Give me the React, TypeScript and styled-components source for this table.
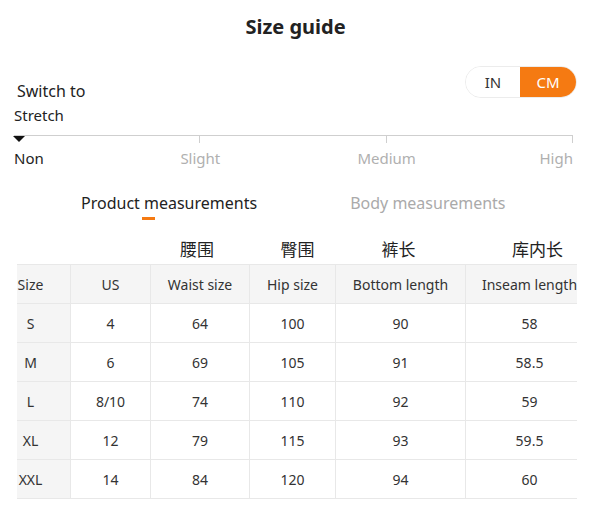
import React from "react";
import styled, { createGlobalStyle } from "styled-components";

const Global = createGlobalStyle`
  html, body { margin: 0; padding: 0; background: #fff; }
  body { font-family: "Noto Sans", "Noto Sans CJK SC", sans-serif; color: #333; }
`;

const Page = styled.div`
  width: 593px;
  height: 527px;
  box-sizing: border-box;
  padding: 0 16px 0 14px;
  overflow: hidden;
`;

const Title = styled.h1`
  margin: 0;
  padding-top: 15px;
  font-size: 20px;
  line-height: 24px;
  font-weight: 700;
  text-align: center;
  color: #222;
`;

const TopRow = styled.div`
  margin-top: 27px;
  display: flex;
  justify-content: space-between;
  align-items: flex-start;
`;

const SwitchLabel = styled.div`
  padding-top: 15px;
  padding-left: 3px;
  font-size: 16px;
  line-height: 20px;
  color: #222;
`;

const Toggle = styled.div`
  display: flex;
  height: 32px;
  border: 1px solid #ececec;
  border-radius: 16px;
  overflow: hidden;
  box-sizing: border-box;
`;

const ToggleOption = styled.div<{ $active?: boolean }>`
  display: flex;
  align-items: center;
  justify-content: center;
  width: ${(p) => (p.$active ? "56px" : "54px")};
  font-size: 15px;
  color: ${(p) => (p.$active ? "#fff" : "#333")};
  background: ${(p) => (p.$active ? "#f57a12" : "#fff")};
`;

const StretchLabel = styled.div`
  margin-top: 4px;
  font-size: 15px;
  line-height: 20px;
  color: #222;
`;

const Track = styled.div`
  position: relative;
  margin-top: 10px;
  margin-right: 4px;
  border-top: 1px solid #cfcfcf;
  display: grid;
  grid-template-columns: repeat(3, 1fr);
  height: 7px;
`;

const Tick = styled.div`
  border-right: 1px solid #cfcfcf;
`;

const Marker = styled.div`
  position: absolute;
  left: -1px;
  top: 0;
  width: 0;
  height: 0;
  border-left: 6.5px solid transparent;
  border-right: 6.5px solid transparent;
  border-top: 6px solid #111;
`;

const Levels = styled.div`
  margin-top: 5px;
  margin-right: 4px;
  display: grid;
  grid-template-columns: repeat(6, 1fr);
  font-size: 15px;
  line-height: 20px;
`;

const Level = styled.div<{ $active?: boolean; $align: "left" | "center" | "right"; $span: number }>`
  grid-column: span ${(p) => p.$span};
  text-align: ${(p) => p.$align};
  color: ${(p) => (p.$active ? "#222" : "#b0b0b0")};
  white-space: nowrap;
`;

const Tabs = styled.div`
  margin-top: 24px;
  padding-left: 67px;
  display: flex;
  gap: 93px;
`;

const Tab = styled.div<{ $active?: boolean }>`
  display: flex;
  flex-direction: column;
  align-items: flex-start;
  font-size: 16px;
  line-height: 22px;
  color: ${(p) => (p.$active ? "#222" : "#aaa")};
`;

const Underline = styled.div`
  margin-top: 3px;
  margin-left: 61px;
  width: 13px;
  height: 3px;
  background: #f57a12;
`;

const TableClip = styled.div`
  margin-top: 5px;
  margin-left: 3px;
  width: 560px;
  overflow: hidden;
`;

const Table = styled.table`
  margin-left: -27px;
  border-collapse: collapse;
  table-layout: fixed;
  width: 603px;
  font-size: 14px;
  color: #333;
`;

const CnCell = styled.td<{ $shift: number }>`
  height: 35px;
  padding: 0 0 4px ${(p) => Math.max(p.$shift, 0) * 2}px;
  padding-right: ${(p) => Math.max(-p.$shift, 0) * 2}px;
  vertical-align: bottom;
  text-align: center;
  font-size: 17px;
  line-height: 22px;
  color: #222;
  font-family: "Noto Sans CJK SC", sans-serif;
  white-space: nowrap;
`;

const Row = styled.tr<{ $head?: boolean }>`
  height: 39px;
  background: ${(p) => (p.$head ? "#f5f5f5" : "#fff")};
`;

const Cell = styled.td<{ $first?: boolean }>`
  padding: 0;
  border: 1px solid #e8e8e8;
  text-align: center;
  white-space: nowrap;
  background: ${(p) => (p.$first ? "#f5f5f5" : "transparent")};
`;

const cols = [80, 80, 99, 86, 130, 128];
const cn: [string, number][] = [
  ["", 0],
  ["", 0],
  ["腰围", -3],
  ["臀围", 5],
  ["裤长", -2],
  ["库内长", 8],
];
const head = ["Size", "US", "Waist size", "Hip size", "Bottom length", "Inseam length"];
const rows = [
  ["S", "4", "64", "100", "90", "58"],
  ["M", "6", "69", "105", "91", "58.5"],
  ["L", "8/10", "74", "110", "92", "59"],
  ["XL", "12", "79", "115", "93", "59.5"],
  ["XXL", "14", "84", "120", "94", "60"],
];

export default function App() {
  return (
    <>
      <Global />
      <Page>
        <Title>Size guide</Title>
        <TopRow>
          <SwitchLabel>Switch to</SwitchLabel>
          <Toggle>
            <ToggleOption>IN</ToggleOption>
            <ToggleOption $active>CM</ToggleOption>
          </Toggle>
        </TopRow>
        <StretchLabel>Stretch</StretchLabel>
        <Track>
          <Tick />
          <Tick />
          <Tick />
          <Marker />
        </Track>
        <Levels>
          <Level $active $align="left" $span={1}>Non</Level>
          <Level $align="center" $span={2}>Slight</Level>
          <Level $align="center" $span={2}>Medium</Level>
          <Level $align="right" $span={1}>High</Level>
        </Levels>
        <Tabs>
          <Tab $active>
            Product measurements
            <Underline />
          </Tab>
          <Tab>Body measurements</Tab>
        </Tabs>
        <TableClip>
          <Table>
            <colgroup>
              {cols.map((w, i) => (
                <col key={i} style={{ width: w }} />
              ))}
            </colgroup>
            <tbody>
              <tr>
                {cn.map(([t, s], i) => (
                  <CnCell key={i} $shift={s}>{t}</CnCell>
                ))}
              </tr>
              <Row $head>
                {head.map((h, i) => (
                  <Cell key={i} $first={i === 0}>{h}</Cell>
                ))}
              </Row>
              {rows.map((r, ri) => (
                <Row key={ri}>
                  {r.map((v, i) => (
                    <Cell key={i} $first={i === 0}>{v}</Cell>
                  ))}
                </Row>
              ))}
            </tbody>
          </Table>
        </TableClip>
      </Page>
    </>
  );
}
